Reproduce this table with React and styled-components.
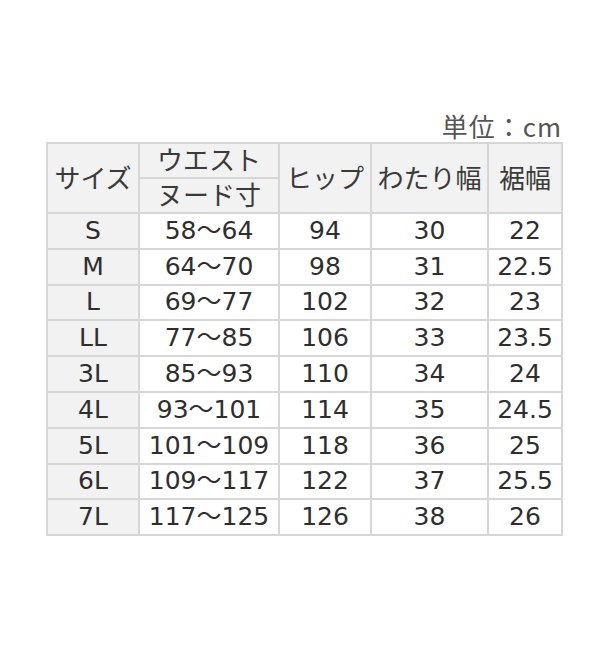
import React from 'react';
import styled, { createGlobalStyle } from 'styled-components';

const GlobalStyle = createGlobalStyle`
  html, body {
    margin: 0;
    padding: 0;
    background: #ffffff;
  }
`;

const Page = styled.div`
  width: 600px;
  height: 660px;
  box-sizing: border-box;
  padding: 109px 39px 0 46px;
  font-family: "DejaVu Sans", "Noto Sans CJK JP", sans-serif;
  color: #2e2e2e;
`;

const Unit = styled.div`
  text-align: right;
  font-size: 26px;
  line-height: 33px;
  letter-spacing: 1px;
  margin-right: -1px;
  color: #555555;
  font-family: "Noto Sans CJK JP", sans-serif;
`;

const Table = styled.table`
  border-collapse: collapse;
  table-layout: fixed;
  width: 515px;
  font-size: 25px;
`;

const Cell = styled.td`
  border: 2px solid #d6d6d6;
  text-align: center;
  vertical-align: middle;
  padding: 0;
  font-weight: 400;
  height: ${(p) => (p.$half ? '33px' : '33.8px')};
  line-height: 28px;
  background: ${(p) => (p.$shade ? '#f2f2f2' : '#ffffff')};
  white-space: nowrap;
`;

const HeadText = styled.span`
  font-family: "Noto Sans CJK JP", sans-serif;
  font-size: 26px;
  font-weight: 400;
  color: #3a3a3a;
`;

const rows = [
  ['S', '58～64', '94', '30', '22'],
  ['M', '64～70', '98', '31', '22.5'],
  ['L', '69～77', '102', '32', '23'],
  ['LL', '77～85', '106', '33', '23.5'],
  ['3L', '85～93', '110', '34', '24'],
  ['4L', '93～101', '114', '35', '24.5'],
  ['5L', '101～109', '118', '36', '25'],
  ['6L', '109～117', '122', '37', '25.5'],
  ['7L', '117～125', '126', '38', '26'],
];

const widths = [92, 140, 92, 117, 74];

export default function App() {
  return (
    <Page>
      <GlobalStyle />
      <Unit>単位：cm</Unit>
      <Table>
        <colgroup>
          {widths.map((w, i) => (
            <col key={i} style={{ width: w }} />
          ))}
        </colgroup>
        <tbody>
          <tr>
            <Cell as="th" rowSpan={2} $shade>
              <HeadText>サイズ</HeadText>
            </Cell>
            <Cell as="th" $shade $half>
              <HeadText>ウエスト</HeadText>
            </Cell>
            <Cell as="th" rowSpan={2} $shade>
              <HeadText>ヒップ</HeadText>
            </Cell>
            <Cell as="th" rowSpan={2} $shade>
              <HeadText>わたり幅</HeadText>
            </Cell>
            <Cell as="th" rowSpan={2} $shade>
              <HeadText>裾幅</HeadText>
            </Cell>
          </tr>
          <tr>
            <Cell as="th" $shade $half>
              <HeadText>ヌード寸</HeadText>
            </Cell>
          </tr>
          {rows.map((r) => (
            <tr key={r[0]}>
              <Cell $shade>{r[0]}</Cell>
              <Cell>{r[1]}</Cell>
              <Cell>{r[2]}</Cell>
              <Cell>{r[3]}</Cell>
              <Cell>{r[4]}</Cell>
            </tr>
          ))}
        </tbody>
      </Table>
    </Page>
  );
}
